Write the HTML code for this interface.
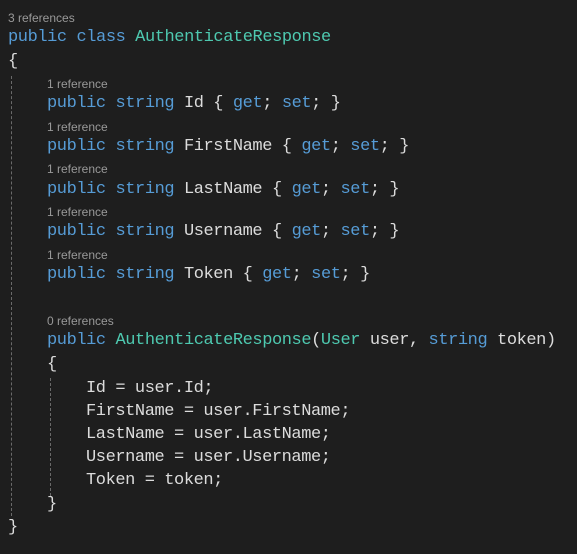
<!DOCTYPE html>
<html><head><meta charset="utf-8"><style>
html,body{margin:0;padding:0;background:#1e1e1e;width:577px;height:554px;overflow:hidden}
.l{position:absolute;white-space:pre;font-family:"Liberation Mono",monospace;font-size:17px;letter-spacing:-0.42px;color:#dcdcdc;line-height:20px}
.r{position:absolute;white-space:pre;font-family:"Liberation Sans",sans-serif;font-size:12px;color:#999;line-height:14px}
.k{color:#569cd6}.t{color:#4ec9b0}
.g{position:absolute;width:0;border-left:1px dashed #6a6a6a}
</style></head><body>
<div class="g" style="left:11px;top:76px;height:440px"></div>
<div class="g" style="left:50px;top:378px;height:118px"></div>
<div class="r" style="left:8px;top:11px">3 references</div>
<div class="l" style="left:8px;top:28px"><span class="k">public class </span><span class="t">AuthenticateResponse</span></div>
<div class="l" style="left:8px;top:52px">{</div>
<div class="r" style="left:47px;top:77px">1 reference</div>
<div class="l" style="left:47px;top:94px"><span class="k">public string</span> Id { <span class="k">get</span>; <span class="k">set</span>; }</div>
<div class="r" style="left:47px;top:120px">1 reference</div>
<div class="l" style="left:47px;top:137px"><span class="k">public string</span> FirstName { <span class="k">get</span>; <span class="k">set</span>; }</div>
<div class="r" style="left:47px;top:162px">1 reference</div>
<div class="l" style="left:47px;top:180px"><span class="k">public string</span> LastName { <span class="k">get</span>; <span class="k">set</span>; }</div>
<div class="r" style="left:47px;top:205px">1 reference</div>
<div class="l" style="left:47px;top:222px"><span class="k">public string</span> Username { <span class="k">get</span>; <span class="k">set</span>; }</div>
<div class="r" style="left:47px;top:248px">1 reference</div>
<div class="l" style="left:47px;top:265px"><span class="k">public string</span> Token { <span class="k">get</span>; <span class="k">set</span>; }</div>
<div class="r" style="left:47px;top:314px">0 references</div>
<div class="l" style="left:47px;top:331px"><span class="k">public </span><span class="t">AuthenticateResponse</span>(<span class="t">User</span> user, <span class="k">string</span> token)</div>
<div class="l" style="left:47px;top:355px">{</div>
<div class="l" style="left:86px;top:379px">Id = user.Id;</div>
<div class="l" style="left:86px;top:402px">FirstName = user.FirstName;</div>
<div class="l" style="left:86px;top:425px">LastName = user.LastName;</div>
<div class="l" style="left:86px;top:448px">Username = user.Username;</div>
<div class="l" style="left:86px;top:471px">Token = token;</div>
<div class="l" style="left:47px;top:495px">}</div>
<div class="l" style="left:8px;top:518px">}</div>
</body></html>
